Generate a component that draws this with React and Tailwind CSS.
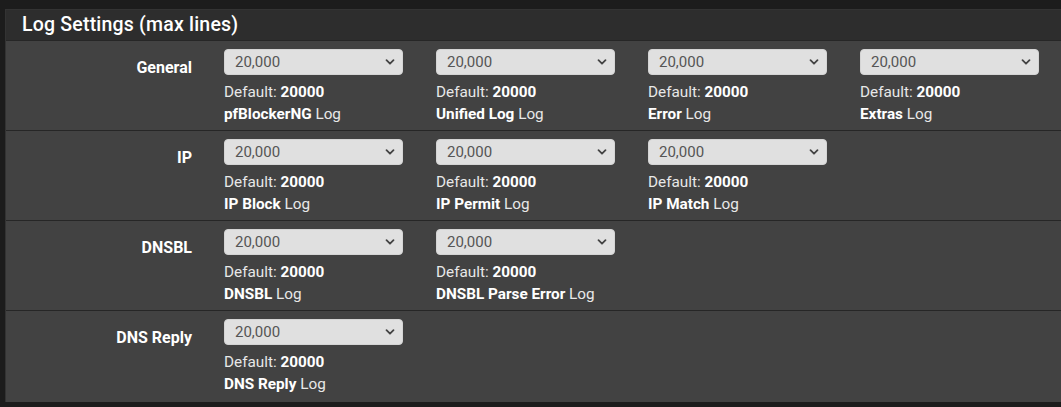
import React from 'react';

const rows = [
    { label: 'General', items: ['pfBlockerNG', 'Unified Log', 'Error', 'Extras'] },
    { label: 'IP', items: ['IP Block', 'IP Permit', 'IP Match'] },
    { label: 'DNSBL', items: ['DNSBL', 'DNSBL Parse Error'] },
    { label: 'DNS Reply', items: ['DNS Reply'] },
];

const Chevron = () => (
    <svg className="w-[10px] h-[10px] text-[#444]" viewBox="0 0 10 10" fill="none">
        <path d="M1.5 3.2 L5 6.7 L8.5 3.2" stroke="currentColor" strokeWidth="1.8" strokeLinecap="round" strokeLinejoin="round" />
    </svg>
);

const LogField = ({ name }) => (
    <div className="w-[179px] flex flex-col">
        <div className="h-[26px] w-full rounded-[4px] bg-[#e0e0e0] border border-[#d4d4d4] flex items-center justify-between pl-[10px] pr-[7px]">
            <span className="text-[15px] text-[#555]">20,000</span>
            <Chevron />
        </div>
        <div className="mt-[6px] h-[22px] text-[15.3px] leading-[22px] text-[#e8e8e8] whitespace-nowrap">
            Default: <b className="font-bold text-white">20000</b>
        </div>
        <div className="h-[22px] text-[15.3px] leading-[22px] text-[#e8e8e8] whitespace-nowrap">
            <b className="font-bold text-white">{name}</b> Log
        </div>
    </div>
);

export default function App() {
    return (
        <div className="w-[1061px] h-[407px] bg-[#1c1c1c] pt-[9px] pl-[5px] overflow-hidden" style={{ fontFamily: 'Roboto, "Liberation Sans", sans-serif' }}>
            <div className="w-[1080px] bg-[#424242] border-t border-l border-[#333]">
                {/* Panel heading */}
                <div className="h-[31px] bg-[#2d2d2d] border-b border-[#262626] flex items-center pl-[16px]">
                    <h2 className="text-[19.5px] font-medium text-white tracking-[0.2px]">Log Settings (max lines)</h2>
                </div>

                {rows.map((row, i) => (
                    <div
                        key={row.label}
                        className={`flex pt-[8px] ${i < rows.length - 1 ? 'h-[90px] border-b border-[#262626]' : 'h-[91px]'}`}
                    >
                        <div className="w-[186px] pt-[10px] text-right text-[16px] font-bold text-white leading-[18px] whitespace-nowrap">
                            {row.label}
                        </div>
                        <div className="ml-[32px] flex gap-[33px]">
                            {row.items.map((name) => (
                                <LogField key={name} name={name} />
                            ))}
                        </div>
                    </div>
                ))}
            </div>
        </div>
    );
}
